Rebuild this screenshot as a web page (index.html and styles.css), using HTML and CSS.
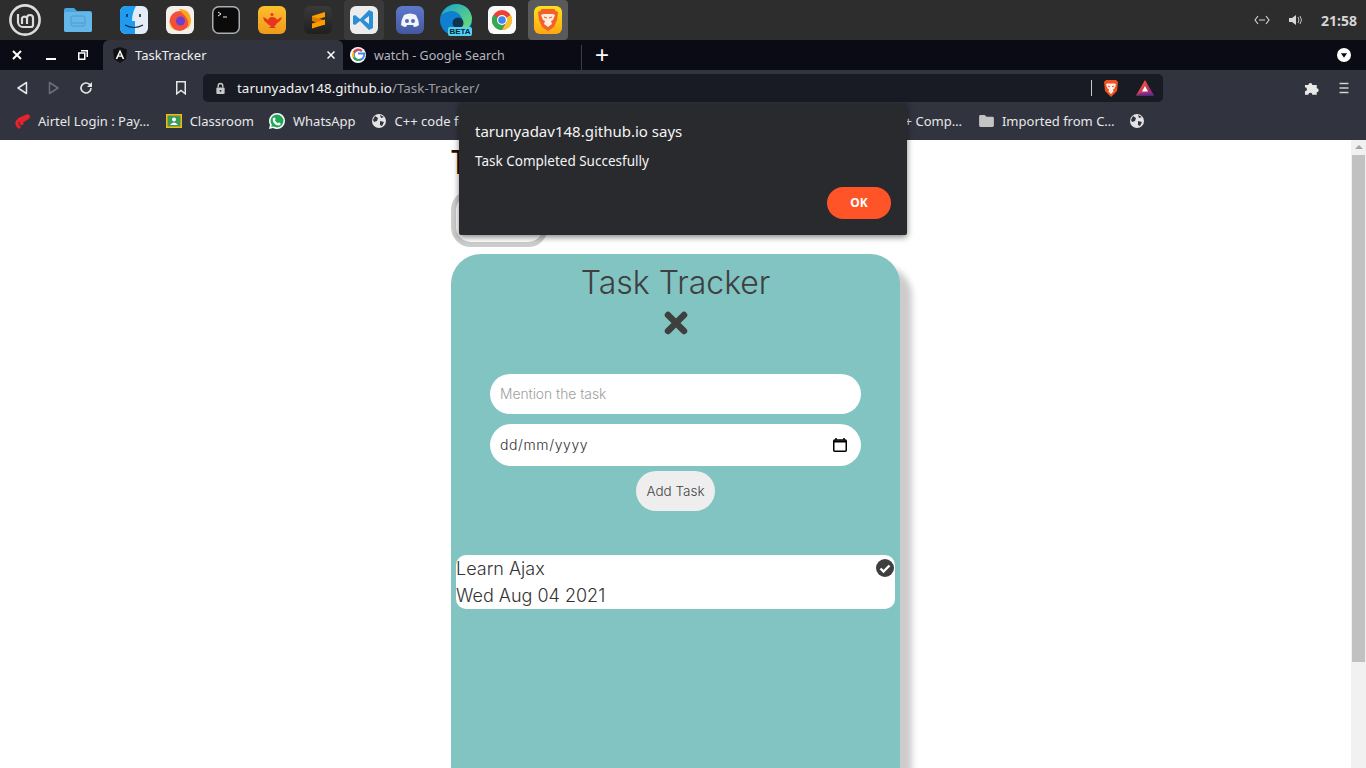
FILE: index.html
```html
<!DOCTYPE html>
<html lang="en">
<head>
<meta charset="utf-8">
<title>TaskTracker</title>
<link rel="stylesheet" href="styles.css">
</head>
<body>
<div class="app">
  <header class="dock">
    <div class="mint"><svg viewBox="0 0 32 32" width="32" height="32"><circle cx="16" cy="16" r="14.6" fill="none" stroke="#dcdcdc" stroke-width="2.6"/><path d="M9 10v8a5 5 0 0 0 5 5h8a2 2 0 0 0 2-2v-7a3 3 0 0 0-6 0v6m0-6a3 3 0 0 0-5 0v6" fill="none" stroke="#dcdcdc" stroke-width="2.200"/></svg></div>
    <div class="folder"><svg viewBox="0 0 28 24" width="28" height="24"><path d="M0 2a2 2 0 0 1 2-2h8l3 3h13a2 2 0 0 1 2 2v17a2 2 0 0 1-2 2H2a2 2 0 0 1-2-2z" fill="#4aa5de"/><rect y="4" width="28" height="20" rx="2" fill="#64b7e8"/><rect x="7" y="8" width="14" height="10" rx="2" fill="none" stroke="#4a9ccf"/><path d="M8 15h12" stroke="#4a9ccf"/></svg></div>
    <div class="dock-icons">
      <div class="slot"><svg class="app-icon" viewBox="0 0 28 28"><rect width="28" height="28" rx="6" fill="#e4ecf7"/><path d="M6 0h10q-4 7-4 15h3v13H6a6 6 0 0 1-6-6V6a6 6 0 0 1 6-6z" fill="#1f9bf0"/><path d="M7 8v3M20 8v3" stroke="#16263f" stroke-width="1.6"/><path d="M5 19q9 5 18 0" fill="none" stroke="#16263f" stroke-width="1.2"/></svg></div>
      <div class="slot"><svg class="app-icon" viewBox="0 0 28 28"><rect width="28" height="28" rx="6" fill="#f3efe9"/><circle cx="13.500" cy="15" r="10" fill="#f2503a"/><circle cx="14.500" cy="15" r="4.500" fill="#6a3fd0"/><path d="M13 3q11 0 12 11q0 6-4 9q3-8-2-13q-3-3-6-7z" fill="#ffa41c"/><path d="M3.500 14q-1 8 6 10.500q-5-4-6-10.500z" fill="#ffc52e"/></svg></div>
      <div class="slot"><svg class="app-icon" viewBox="0 0 28 28"><rect x=".75" y=".75" width="26.5" height="26.5" rx="6" fill="#0b0b0c" stroke="#a9b0b4" stroke-width="1.5"/><path d="M6 6l3 2-3 2" fill="none" stroke="#eee"/><path d="M11 11h4" stroke="#eee"/></svg></div>
      <div class="slot"><svg class="app-icon" viewBox="0 0 28 28"><defs><linearGradient id="g1" x1="0" y1="0" x2="0" y2="1"><stop offset="0" stop-color="#fbbf2b"/><stop offset="1" stop-color="#ef9a1a"/></linearGradient></defs><rect width="28" height="28" rx="6" fill="url(#g1)"/><path d="M5 11q3 1 5 3q1-3 4-3q4 0 5 3q2-2 5-3q-1 4-5 6q-1 3-3 3l2 2H11l2-2q-3-1-4-3q-3-1-4-6z" fill="#e8341f"/><circle cx="14" cy="8.5" r="1.5" fill="#e8341f"/></svg></div>
      <div class="slot"><svg class="app-icon" viewBox="0 0 28 28"><defs><linearGradient id="g3" x1="0" y1="0" x2="0" y2="1"><stop offset="0" stop-color="#3a3a3a"/><stop offset="1" stop-color="#1f1f1f"/></linearGradient></defs><rect width="28" height="28" rx="6" fill="url(#g3)"/><path d="M21 6L8 10v5l13-4z" fill="#ff9d00"/><path d="M8 10.500l13 4v4.500L8 15z" fill="#d97f00"/><path d="M21 13.500L8 17.500v5l13-4z" fill="#ff9d00"/></svg></div>
      <div class="slot active"><svg class="app-icon" viewBox="0 0 28 28"><rect width="28" height="28" rx="6" fill="#ececec"/><path d="M19 4l4 2v16l-4 2-9-9-5 4-2-1V10l2-1 5 4zM19 10l-5 4 5 4z" fill="#2a8fd8"/></svg></div>
      <div class="slot"><svg class="app-icon" viewBox="0 0 28 28"><defs><linearGradient id="g4" x1="0" y1="0" x2="0" y2="1"><stop offset="0" stop-color="#5f78cc"/><stop offset="1" stop-color="#44589f"/></linearGradient></defs><rect width="28" height="28" rx="6" fill="url(#g4)"/><path d="M8 9q6-3 12 0q3 5 3 10q-2 2-5 2l-1-2h-6l-1 2q-3 0-5-2q0-5 3-10z" fill="#f2f4fb"/><circle cx="11" cy="15" r="2" fill="#5468b8"/><circle cx="17" cy="15" r="2" fill="#5468b8"/></svg></div>
      <div class="slot edge"><svg class="app-icon tall" viewBox="0 0 32 32"><defs><linearGradient id="g5" x1="0" y1="0" x2="1" y2="1"><stop offset="0" stop-color="#1aa3c9"/><stop offset="1" stop-color="#6fdc74"/></linearGradient></defs><circle cx="16" cy="16" r="16" fill="#0f7fd0"/><path d="M1 11Q7 0 17 0q13 1 15 14q0 5-3 9H17q7-3 5-9Q18 6 10 7q-5 1-9 4z" fill="url(#g5)"/><circle cx="18" cy="19" r="5.500" fill="#12324f"/></svg><span class="beta">BETA</span></div>
      <div class="slot"><svg class="app-icon" viewBox="0 0 28 28"><rect width="28" height="28" rx="6" fill="#fbfbfb"/><circle cx="14" cy="14" r="10" fill="#ea4335"/><path d="M14 14L5.3 9A10 10 0 0 0 14 24l5-8.700z" fill="#34a853"/><path d="M14 14l8.700-5A10 10 0 0 1 14 24l5-8.700z" fill="#fbc02d"/><circle cx="14" cy="14" r="5" fill="#fff"/><circle cx="14" cy="14" r="3.800" fill="#4285f4"/></svg></div>
      <div class="slot active-strong"><svg class="app-icon" viewBox="0 0 28 28"><defs><linearGradient id="g2" x1="0" y1="0" x2="0" y2="1"><stop offset="0" stop-color="#ffe21a"/><stop offset="1" stop-color="#ffa70f"/></linearGradient></defs><rect width="28" height="28" rx="6" fill="url(#g2)"/><path d="M8 3h12l2 2 2 1-1 8-3 7-6 4-6-4-3-7-1-8 2-1z" fill="#f4602b"/><path d="M9 8h10l2 1-2 5-2 1 1 3-4 3-4-3 1-3-2-1-2-5z" fill="#fbeee0"/><path d="M10 11l3 1M18 11l-3 1" stroke="#f4602b" stroke-width="1.200"/></svg></div>
    </div>
    <div class="tray">
      <svg viewBox="0 0 16 10" width="16" height="10"><path d="M4 1L1 5l3 4M12 1l3 4-3 4M5 5h6" fill="none" stroke="#d8d8d8" stroke-width="1.100"/></svg>
      <svg viewBox="0 0 16 12" width="16" height="12"><path d="M1 4h3l4-3v10L4 8H1z" fill="#d8d8d8"/><path d="M10 3q2 3 0 6M12 2q3 4 0 8" fill="none" stroke="#c0c0c0"/></svg>
      <span class="clock">21:58</span>
    </div>
  </header>

  <nav class="tabstrip">
    <div class="win-controls">
      <svg viewBox="0 0 10 10" width="10" height="10"><path d="M1 1l8 8M9 1l-8 8" stroke="#fff" stroke-width="2"/></svg>
      <svg class="win-min" viewBox="0 0 10 10" width="10" height="10"><path d="M0 9h10" stroke="#fff" stroke-width="2"/></svg>
      <svg viewBox="0 0 10 10" width="10" height="10"><path d="M3 .750h6.250V7M.75 3h6v6.250h-6z" fill="none" stroke="#fff" stroke-width="1.500"/></svg>
    </div>
    <div class="tab tab-active">
      <svg viewBox="0 0 14 16" width="14" height="16"><path d="M7 0L0 2.500 1 12l6 4 6-4 1-9.500z" fill="#111"/><path d="M7 2.500L2.700 12h1.700l.9-2.200h3.400l.9 2.200h1.700zM6 8.400l1-2.600 1 2.600z" fill="#fff"/></svg>
      <span class="tab-title">TaskTracker</span>
      <svg class="tab-close" viewBox="0 0 8 8" width="8" height="8"><path d="M.5.500l7 7M7.500.500l-7 7" stroke="#fff" stroke-width="1.500"/></svg>
    </div>
    <div class="tab tab-other">
      <svg viewBox="0 0 16 16" width="16" height="16"><circle cx="8" cy="8" r="8" fill="#fff"/><path d="M8 6.600h6.300c.3 3.500-2 6.400-5.700 6.400A5 5 0 1 1 11.800 4" fill="none" stroke="#4285f4" stroke-width="2"/><path d="M3.600 5.500A5 5 0 0 1 11.800 4" fill="none" stroke="#ea4335" stroke-width="2"/><path d="M3.600 10.500a5 5 0 0 1 0-5" fill="none" stroke="#fbbc05" stroke-width="2"/><path d="M3.600 10.500A5 5 0 0 0 11 12" fill="none" stroke="#34a853" stroke-width="2"/></svg>
      <span class="tab-title dim">watch - Google Search</span>
    </div>
    <span class="new-tab">+</span>
    <span class="tab-menu"><svg viewBox="0 0 16 16" width="14" height="14"><circle cx="8" cy="8" r="8" fill="#fff"/><path d="M4.500 6h7L8 11z" fill="#0a0b14"/></svg></span>
  </nav>

  <div class="toolbar">
    <div class="nav-buttons">
      <svg viewBox="0 0 12 14" width="12" height="14"><path d="M10.500 1.500v11L2 7z" fill="none" stroke="#e6e6e6" stroke-width="1.500" stroke-linejoin="round"/></svg>
      <svg viewBox="0 0 12 14" width="12" height="14"><path d="M1.500 1.500v11L10 7z" fill="none" stroke="#6c6f78" stroke-width="1.500" stroke-linejoin="round"/></svg>
      <svg class="reload" viewBox="0 0 14 14" width="14" height="14"><path d="M12 7a5 5 0 1 1-1.500-3.600L12 5" fill="none" stroke="#e6e6e6" stroke-width="1.600"/><path d="M13 1v5H8z" fill="#e6e6e6"/></svg>
    </div>
    <svg class="bookmark-btn" viewBox="0 0 12 14" width="12" height="14"><path d="M1.750.750h8.500v12L6 9.500 1.750 12.750z" fill="none" stroke="#e6e6e6" stroke-width="1.500"/></svg>
    <div class="urlbar">
      <svg viewBox="0 0 12 14" width="11" height="13"><path d="M3.500 6V4a2.500 2.500 0 0 1 5 0v2" fill="none" stroke="#c8c8c8" stroke-width="1.500"/><rect x="1.500" y="6" width="9" height="7" rx="1" fill="#c8c8c8"/><circle cx="6" cy="9.500" r="1" fill="#191b24"/></svg>
      <span class="url"><span class="host">tarunyadav148.github.io</span><span class="path">/Task-Tracker/</span></span>
      <span class="url-sep"></span>
      <svg viewBox="0 0 16 18" width="16" height="18"><path d="M3 1h10l2 2-1 9-6 6-6-6-1-9z" fill="#f1501f"/><path d="M4 4.500h8l1 1-1.500 4-1.500 1 .5 2L8 15l-2.500-2.500.5-2-1.500-1L3 5.500z" fill="#fdeee6"/><path d="M5 7l2 .8M11 7l-2 .8" stroke="#f1501f"/></svg>
      <svg class="bat" viewBox="0 0 18 16" width="18" height="16"><defs><linearGradient id="g6" x1="0" y1="0" x2="1" y2="1"><stop offset=".3" stop-color="#f4503a"/><stop offset=".7" stop-color="#a0306f"/><stop offset="1" stop-color="#662d91"/></linearGradient></defs><path d="M9 0l9 15.500H0z" fill="url(#g6)"/><path d="M0 15.500l4-2h10l4 2z" fill="#662d91"/><path d="M9 6l3 5.500H6z" fill="#fff"/></svg>
    </div>
    <div class="tool-right">
      <svg viewBox="0 0 16 16" width="16" height="16"><path d="M1 5h3.500a2 2 0 1 1 4 0H13v3.500a2 2 0 1 1 0 4V15H8.500a2 2 0 1 0-4 0H1v-3.500a2 2 0 1 0 0-4z" fill="#e8e8e8" transform="scale(.98)"/></svg>
      <svg viewBox="0 0 12 12" width="12" height="12"><path d="M1.500 1.500h9M1.500 6h9M1.500 10.500h9" stroke="#d0d0d0" stroke-width="1.500"/></svg>
    </div>
  </div>

  <div class="bookmarks">
    <span class="bm first"><svg viewBox="0 0 16 16" width="16" height="16"><path d="M5 14C1 11 3 7 8 5c3-1.500 6-3 6.500-1.500S11 6 8.500 8C6.500 9.500 6.500 11 8 10.500" fill="none" stroke="#e8242a" stroke-width="3" stroke-linecap="round"/></svg>Airtel Login : Pay…</span>
    <span class="bm"><svg viewBox="0 0 16 14" width="16" height="14"><rect width="16" height="14" fill="#f9b90f"/><rect x="1.500" y="1.500" width="13" height="11" fill="#3a9b5c"/><circle cx="8" cy="5.500" r="2" fill="#fff"/><path d="M4 11q4-5 8 0z" fill="#fff"/></svg>Classroom</span>
    <span class="bm wa"><svg viewBox="0 0 16 16" width="16" height="16"><path d="M8 0a8 8 0 0 1 0 16q-2 0-4-1L0 16l1-4Q0 10 0 8a8 8 0 0 1 8-8z" fill="#fff"/><path d="M8 1.500a6.500 6.500 0 0 1 0 13l-3.500-1-2.300.6.600-2.300A6.500 6.500 0 0 1 8 1.500z" fill="#1fa855"/><path d="M5.500 4.500c1 0 1 2 1 2l-.6.800q1 2 3 3l.8-.7s2 .5 2 1.400-1 1.400-2 1.400c-3 0-6-3-6-6 0-1 .8-1.900 1.800-1.900z" fill="#fff"/></svg>WhatsApp</span>
    <span class="bm"><svg class="globe" viewBox="0 0 14 14" width="14" height="14"><circle cx="7" cy="7" r="7" fill="#e4e4e4"/><path d="M3 2l3 2-1 3-3 1-1-2zM8 7l4 1-2 4-2-1zM8 1l4 2-3 1z" fill="#31343f"/></svg>C++ code for</span>
    <span class="bm-spacer"></span>
    <span class="bm comp">+ Comp…</span>
    <span class="bm"><svg viewBox="0 0 16 13" width="15" height="12"><path d="M0 1.500A1.500 1.500 0 0 1 1.500 0H6l2 2h6.500A1.500 1.500 0 0 1 16 3.500v8a1.500 1.500 0 0 1-1.500 1.500h-13A1.500 1.500 0 0 1 0 11.500z" fill="#c4c4c4"/></svg>Imported from C…</span>
    <span class="bm"><svg class="globe" viewBox="0 0 14 14" width="14" height="14"><circle cx="7" cy="7" r="7" fill="#e4e4e4"/><path d="M3 2l3 2-1 3-3 1-1-2zM8 7l4 1-2 4-2-1zM8 1l4 2-3 1z" fill="#31343f"/></svg></span>
  </div>

  <main class="viewport">
    <div class="page">
      <div class="column">
        <h1 class="behind-title">T</h1>
        <div class="behind-box"></div>
        <section class="card">
          <h2 class="card-title">Task Tracker</h2>
          <svg class="close-icon" viewBox="0 0 24 24" width="24" height="24"><path d="M4 4l16 16M20 4L4 20" stroke="#3f3f3f" stroke-width="6.500" stroke-linecap="round"/></svg>
          <form class="task-form">
            <div class="field field-text">Mention the task</div>
            <div class="field field-date"><span>dd/mm/yyyy</span><svg viewBox="0 0 14 14" width="14" height="14"><path d="M3 0v2M11 0v2" stroke="#000" stroke-width="1.500"/><rect x=".75" y="2" width="12.500" height="11.250" rx="1" fill="none" stroke="#000" stroke-width="1.500"/><path d="M1 3.500h12" stroke="#000" stroke-width="2"/></svg></div>
            <div class="add-btn">Add Task</div>
          </form>
          <div class="task">
            <div class="task-text">
              <div>Learn Ajax</div>
              <div>Wed Aug 04 2021</div>
            </div>
            <svg class="check" viewBox="0 0 18 18" width="18" height="18"><circle cx="9" cy="9" r="9" fill="#3f3f3f"/><path d="M4.500 9.500l3 3 6-6" fill="none" stroke="#fff" stroke-width="2.400"/></svg>
          </div>
        </section>
      </div>
    </div>
    <div class="scrollbar">
      <span class="scroll-up"></span>
      <span class="scroll-thumb"></span>
    </div>
  </main>

  <div class="dialog">
    <div class="dialog-title">tarunyadav148.github.io says</div>
    <div class="dialog-msg">Task Completed Succesfully</div>
    <div class="dialog-actions"><span class="ok">OK</span></div>
  </div>
</div>
</body>
</html>
```
FILE: styles.css
```css
* { box-sizing: border-box; }
html, body { margin: 0; height: 100%; overflow: hidden; }
body { font-family: "Noto Sans", "Open Sans", sans-serif; background: #fff; }
.app { display: flex; flex-direction: column; height: 768px; position: relative; }

.dock { height: 40px; background: #2d2d2d; display: flex; align-items: center; flex: none; }
.mint { width: 32px; height: 32px; margin-left: 9px; }
.mint svg, .folder svg { display: block; }
.folder { margin-left: 23px; width: 28px; height: 24px; }
.dock-icons { display: flex; margin-left: 19px; }
.slot { width: 46px; height: 40px; display: flex; align-items: center; justify-content: center; position: relative; }
.app-icon { width: 28px; height: 28px; display: block; }
.app-icon.tall { width: 32px; height: 32px; }
.active::before, .active-strong::before { content: ""; position: absolute; left: 3px; right: 3px; top: 0; bottom: 0; border-radius: 4px; }
.active::before { background: #3a3a3a; }
.active-strong::before { background: #5a5a5a; }
.slot svg { position: relative; }
.beta { position: absolute; left: 15px; bottom: 4px; width: 24px; height: 9px; background: #4fd3f5; color: #0b2233; border-radius: 2px; font: 700 8px/9px "Liberation Sans", sans-serif; text-align: center; }
.tray { margin-left: auto; display: flex; align-items: center; gap: 18px; padding-right: 8px; }
.clock { color: #d6d6d6; font: 700 14px "Noto Sans", sans-serif; width: 37px; white-space: nowrap; margin-left: -1px; }

.tabstrip { height: 30px; background: #0a0b14; display: flex; align-items: stretch; flex: none; position: relative; }
.win-controls { width: 103px; display: flex; align-items: center; gap: 22px; padding-left: 12px; }
.win-min { margin-left: 2px; }
.tab { display: flex; align-items: center; gap: 8px; padding-left: 10px; font-size: 13px; }
.tab-active { width: 240px; background: #31343f; border-radius: 6px 6px 0 0; color: #f0f0f0; position: relative; }
.tab-close { position: absolute; right: 8px; top: 11px; }
.tab-other { width: 239px; padding-left: 7px; border-right: 1px solid #3a3c46; margin: 5px 0 0; align-items: center; padding-bottom: 5px; font-size: 12.5px; }
.tab-title.dim { color: #b4b6bd; }
.new-tab { color: #fff; font: 400 24px/30px "Liberation Sans", sans-serif; margin-left: 13px; }
.tab-menu { margin-left: auto; margin-right: 15px; display: flex; align-items: center; }

.toolbar { height: 35px; background: #31343f; display: flex; align-items: center; flex: none; padding-top: 1px; }
.nav-buttons { display: flex; align-items: center; gap: 20px; padding-left: 16px; width: 175px; }
.reload { margin-left: -1px; }
.bookmark-btn { flex: none; }
.urlbar { width: 960px; height: 28px; margin-left: 16px; background: #191b24; border-radius: 5px; display: flex; align-items: center; padding-left: 12px; flex: none; }
.url { margin-left: 11px; font-size: 13.45px; flex: 1; }
.host { color: #f2f2f2; }
.path { color: #9a9ca3; }
.url-sep { width: 1px; height: 16px; background: #c8c8c8; margin-right: 11px; }
.bat { margin: 0 9px 0 17px; }
.tool-right { display: flex; align-items: center; gap: 18px; margin-left: 141px; }

.bookmarks { height: 35px; background: #31343f; display: flex; align-items: center; flex: none; color: #e8e8e8; font-size: 13px; padding: 0 0 4px 14px; position: relative; }
.bm { display: flex; align-items: center; gap: 8px; margin-right: 15px; white-space: nowrap; }
.bm.first, .bm.wa { margin-right: 16px; }
.bm .globe { margin-right: 1px; }
.bm-spacer { width: 418px; }
.comp { margin-right: 17px; }

.viewport { flex: 1; display: flex; min-height: 0; overflow: hidden; }
.page { flex: 1; min-width: 0; display: flex; justify-content: center; overflow: hidden; }
.column { width: 449px; }
.behind-title { margin: 2px 0 0; font: 400 35px/40px "Liberation Sans", sans-serif; color: #201010; transform: scaleX(.68); transform-origin: left center; }
.behind-box { width: 97px; height: 57px; margin-top: 8px; border: 5px solid #ccc; border-radius: 20px; }
.card { margin-top: 7px; height: 600px; background: #81c4c2; border-radius: 30px 30px 0 0; box-shadow: 12px 12px 6px #ccc; display: flex; flex-direction: column; align-items: center; padding-top: 9px; color: #3f3f3f; font-family: Inter, sans-serif; font-weight: 300; }
.card-title { margin: 0; font: 300 32px/40px Inter, sans-serif; color: #3f3f3f; }
.close-icon { margin-top: 8px; }
.task-form { display: flex; flex-direction: column; align-items: center; margin-top: 39px; width: 371px; }
.field { width: 100%; background: #fff; display: flex; align-items: center; }
.field-text { height: 40px; border-radius: 20px; padding: 0 0 1px 10px; font-size: 13.800px; color: #9e9e9e; }
.field-date { height: 42px; border-radius: 21px; margin-top: 10px; padding: 0 14px 0 10px; font-size: 14px; letter-spacing: .6px; color: #333; justify-content: space-between; }
.field-date span { margin-bottom: 2px; }
.add-btn { width: 79px; height: 40px; margin-top: 5px; padding-bottom: 1px; border-radius: 20px; background: #eee; display: flex; align-items: center; justify-content: center; font-size: 13.500px; color: #444; }
.task { width: 439px; height: 54px; margin-top: 44px; background: #fff; border-radius: 10px; display: flex; justify-content: space-between; font-size: 18px; line-height: 27px; color: #333; }
.check { margin: 4px 1px 0 0; }

.scrollbar { width: 15px; background: #f1f1f1; display: flex; flex-direction: column; align-items: center; flex: none; }
.scroll-up { width: 0; height: 0; margin-top: 5px; border-left: 4px solid transparent; border-right: 4px solid transparent; border-bottom: 4px solid #a3a3a3; }
.scroll-thumb { width: 15px; height: 507px; margin-top: 6px; background: #c1c1c1; border: 1px solid #f1f1f1; border-width: 0 1px; }

.dialog { position: absolute; left: 459px; top: 103px; width: 448px; height: 132px; background: #292a2e; border-radius: 2px; box-shadow: 0 2px 6px rgba(0,0,0,.5); padding: 18px 16px 0; color: #f4f4f4; }
.dialog-title { font-size: 15px; line-height: 20px; }
.dialog-msg { font-size: 13.500px; line-height: 20px; margin-top: 10px; }
.dialog-actions { display: flex; justify-content: flex-end; margin-top: 16px; }
.ok { width: 64px; height: 32px; border-radius: 16px; background: #ff5428; color: #fff; font: 700 12px/32px "Noto Sans", sans-serif; text-align: center; }
```
